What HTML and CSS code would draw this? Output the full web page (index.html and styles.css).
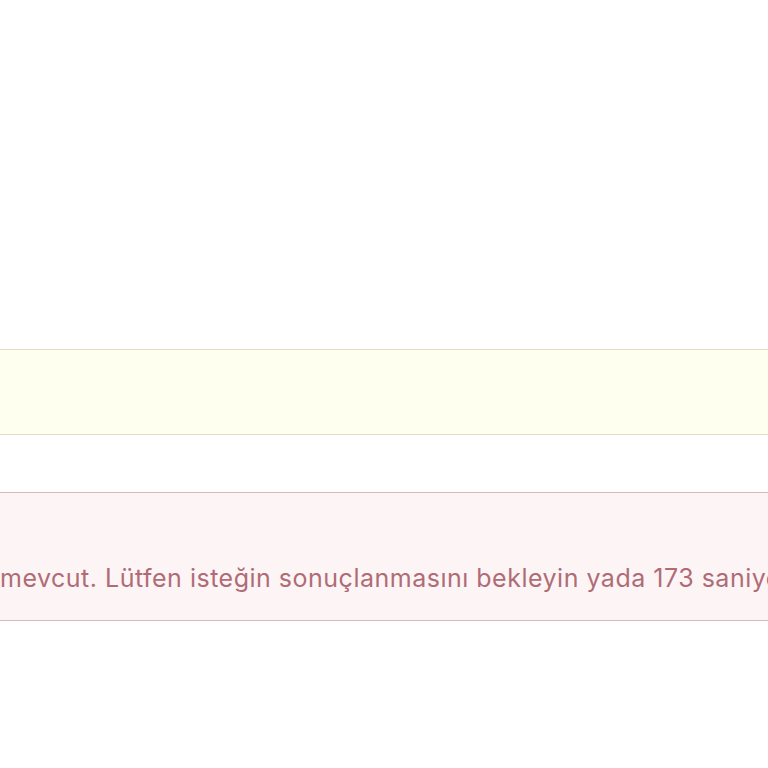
FILE: index.html
```html
<!DOCTYPE html>
<html lang="tr">
<head>
<meta charset="utf-8">
<link rel="stylesheet" href="styles.css">
</head>
<body>
<main class="page">
  <div class="alert alert-warning"></div>
  <div class="alert alert-danger"><p class="msg">mevcut. Lütfen isteğin sonuçlanmasını bekleyin yada 173 saniye sonra tekrar deneyin.</p></div>
</main>
</body>
</html>
```
FILE: styles.css
```css
html, body {
  margin: 0;
  padding: 0;
  background: #ffffff;
  overflow: hidden;
}
.page {
  width: 768px;
  padding-top: 349px;
  display: flex;
  flex-direction: column;
  gap: 57px;
  font-family: Inter, "Noto Sans", sans-serif;
}
.alert {
  box-sizing: border-box;
  border-top: 1px solid;
  border-bottom: 1px solid;
  overflow: hidden;
  white-space: nowrap;
}
.alert-warning {
  height: 86px;
  background: #fffff0;
  border-color: #e2e0c4;
}
.alert-danger {
  height: 129px;
  background: #fdf5f5;
  border-color: #dcb8bd;
  padding: 67px 0 0 0;
}
.msg {
  margin: 0;
  font-size: 25px;
  letter-spacing: 0.5px;
  line-height: 36px;
  color: #b06c76;
}
```
